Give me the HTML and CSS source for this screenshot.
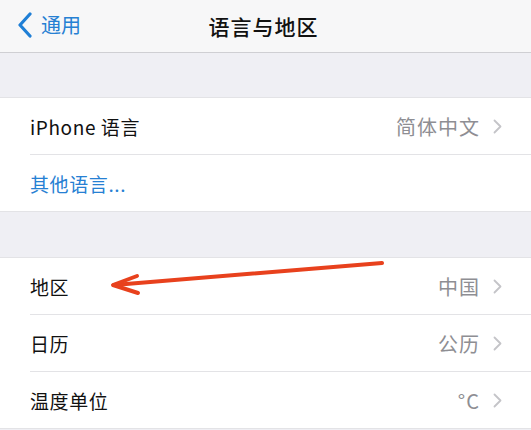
FILE: index.html
```html
<!DOCTYPE html>
<html lang="zh-CN">
<head>
  <meta charset="UTF-8" />
  <meta name="viewport" content="width=device-width, initial-scale=1.0" />
  <title>语言与地区</title>
  <link rel="stylesheet" href="styles.css">
</head>
<body>
  <header class="navbar">
    <div class="back">
      <svg class="back-icon" width="16" height="26" viewBox="0 0 16 26"><path d="M13 2 L3 13 L13 24" fill="none" stroke="#1f7fd6" stroke-width="3.2" stroke-linecap="round" stroke-linejoin="round"/></svg>
      <span>通用</span>
    </div>
    <h1 class="title">语言与地区</h1>
  </header>

  <div class="spacer"></div>
  <div class="group">
    <div class="row">
      <span class="label">iPhone 语言</span>
      <span class="value">简体中文</span>
      <svg class="chevron" width="9" height="15" viewBox="0 0 9 15"><path d="M1.5 1.5 L7.5 7.5 L1.5 13.5" fill="none" stroke="#c4c4c8" stroke-width="1.8" stroke-linecap="round" stroke-linejoin="round"/></svg>
    </div>
    <div class="row">
      <span class="label link">其他语言...</span>
    </div>
  </div>

  <div class="spacer tall"></div>
  <div class="group">
    <div class="row">
      <span class="label">地区</span>
      <span class="value">中国</span>
      <svg class="chevron" width="9" height="15" viewBox="0 0 9 15"><path d="M1.5 1.5 L7.5 7.5 L1.5 13.5" fill="none" stroke="#c4c4c8" stroke-width="1.8" stroke-linecap="round" stroke-linejoin="round"/></svg>
    </div>
    <div class="row">
      <span class="label">日历</span>
      <span class="value">公历</span>
      <svg class="chevron" width="9" height="15" viewBox="0 0 9 15"><path d="M1.5 1.5 L7.5 7.5 L1.5 13.5" fill="none" stroke="#c4c4c8" stroke-width="1.8" stroke-linecap="round" stroke-linejoin="round"/></svg>
    </div>
    <div class="row">
      <span class="label">温度单位</span>
      <span class="value">°C</span>
      <svg class="chevron" width="9" height="15" viewBox="0 0 9 15"><path d="M1.5 1.5 L7.5 7.5 L1.5 13.5" fill="none" stroke="#c4c4c8" stroke-width="1.8" stroke-linecap="round" stroke-linejoin="round"/></svg>
    </div>
  </div>

  <svg class="annotation" width="531" height="430" viewBox="0 0 531 430">
    <g fill="none" stroke="#e8411d" stroke-width="4" stroke-linecap="round" stroke-linejoin="round">
      <path d="M382 263 L114 285"/>
      <path d="M137 276 L113 285 L138 293"/>
    </g>
  </svg>
</body>
</html>
```

FILE: styles.css
```css
body {
  margin: 0;
  width: 531px;
  height: 430px;
  overflow: hidden;
  position: relative;
  background-color: #efeff4;
  font-family: "Noto Sans CJK SC", "Noto Sans", sans-serif;
  color: #111;
}
.navbar {
  height: 52px;
  border-bottom: 1px solid #cfcfd3;
  background-color: #f7f7f8;
  display: flex;
  align-items: center;
  justify-content: center;
  position: relative;
}
.back {
  position: absolute;
  left: 17px;
  top: 12px;
  display: flex;
  align-items: center;
  gap: 8px;
  color: #2680d3;
  font-size: 20px;
  line-height: 26px;
}
.back-icon {
  display: block;
}
.title {
  margin: 0 0 0 -4px;
  font-size: 21px;
  font-weight: 500;
  letter-spacing: 1px;
  color: #111;
}
.spacer {
  height: 44px;
}
.spacer.tall {
  height: 45px;
}
.group {
  background-color: #fff;
  border-top: 1px solid #e3e3e6;
  border-bottom: 1px solid #e3e3e6;
}
.row {
  margin-left: 30px;
  padding-right: 29px;
  height: 56px;
  display: flex;
  align-items: center;
  border-bottom: 1px solid #e3e3e6;
}
.row:last-child {
  border-bottom: none;
}
.label {
  flex: 1;
  font-size: 19px;
  letter-spacing: 0.6px;
}
.label.link {
  color: #2680d3;
}
.value {
  font-size: 20px;
  color: #8e8e93;
  letter-spacing: 1px;
}
.chevron {
  display: block;
  margin-left: 13px;
}
.annotation {
  position: absolute;
  left: 0;
  top: 0;
  pointer-events: none;
}
```
